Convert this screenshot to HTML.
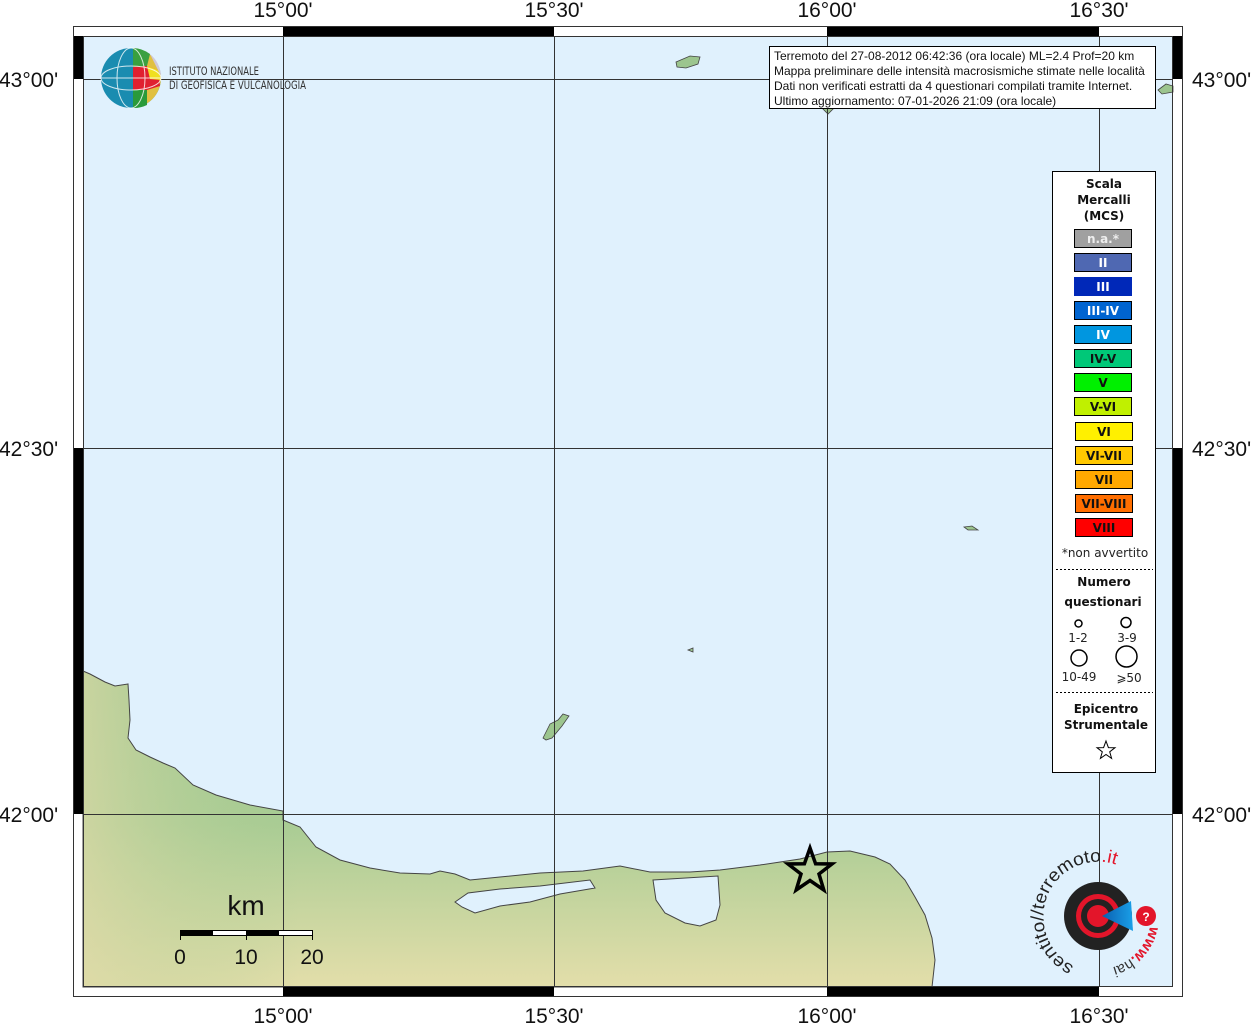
<!DOCTYPE html>
<html><head><meta charset="utf-8"><style>
html,body{margin:0;padding:0;background:#fff;}
svg{display:block;font-family:"Liberation Sans",sans-serif;}
.dv{font-family:"DejaVu Sans",sans-serif;}
</style></head><body>
<svg width="1256" height="1024" viewBox="0 0 1256 1024" xmlns="http://www.w3.org/2000/svg">
<defs>
<linearGradient id="land" x1="0" y1="0" x2="0" y2="1">
<stop offset="0" stop-color="#9ac78f"/><stop offset="0.5" stop-color="#a9cc94"/><stop offset="1" stop-color="#e3deaa"/>
</linearGradient>
<linearGradient id="land2" x1="0" y1="0" x2="1" y2="0">
<stop offset="0" stop-color="#dcd9a6" stop-opacity="0.7"/><stop offset="0.25" stop-color="#a8cc92" stop-opacity="0"/><stop offset="1" stop-color="#a8cc92" stop-opacity="0"/>
</linearGradient>
<linearGradient id="cone" x1="0" y1="0" x2="1" y2="0"><stop offset="0" stop-color="#0a5fb0"/><stop offset="1" stop-color="#1aa0e8"/></linearGradient>
<clipPath id="landclip"><path id="landpath" d="M83,671 L90,674 L105,682 L115,686 L128,684 L129,700 L130,720 L128,738 L136,750 L150,757 L163,763 L175,768 L193,785 L216,795 L250,805 L283,811 L283,820 L300,827 L316,847 L340,860 L370,868 L400,873 L430,874 L440,871 L455,874 L470,880 L500,877 L540,873 L583,871 L620,866 L650,872 L690,872 L720,870 L760,865 L800,859 L827,852 L850,851 L875,857 L890,864 L905,880 L915,897 L925,915 L932,938 L935,960 L932,987 L83,987 Z"/></clipPath>
</defs>
<rect x="0" y="0" width="1256" height="1024" fill="#fff"/>
<rect x="83" y="36" width="1090" height="951" fill="#e0f1fd"/>
<!-- land -->
<rect x="83" y="660" width="860" height="327" fill="url(#land)" clip-path="url(#landclip)"/>
<rect x="83" y="660" width="860" height="327" fill="url(#land2)" clip-path="url(#landclip)"/>
<use href="#landpath" fill="none" stroke="#444" stroke-width="1"/>
<!-- lagoons -->
<path d="M455,902 L468,893 L500,889 L540,886 L590,880 L595,888 L560,894 L530,902 L500,906 L475,913 L462,907 Z" fill="#e0f1fd" stroke="#444" stroke-width="1"/>
<path d="M653,880 L718,876 L720,905 L716,920 L700,926 L685,923 L665,913 L656,900 Z" fill="#e0f1fd" stroke="#444" stroke-width="1"/>
<!-- islands -->
<path d="M543,738 L550,724 L558,720 L563,714 L569,716 L562,726 L552,738 L546,740 Z" fill="#9cc58e" stroke="#444" stroke-width="0.8"/>
<path d="M676,62 L690,56 L700,57 L698,64 L686,68 L677,67 Z" fill="#9cc58e" stroke="#444" stroke-width="0.8"/>
<path d="M688,650 L693,648 L693,652 Z" fill="#9cc58e" stroke="#444" stroke-width="0.8"/>
<path d="M964,527 L972,526 L978,530 L968,530 Z" fill="#9cc58e" stroke="#444" stroke-width="0.8"/>
<path d="M1158,90 L1166,84 L1173,86 L1173,92 L1162,94 Z" fill="#9cc58e" stroke="#444" stroke-width="0.8"/>
<path d="M822,108 L828,104 L834,108 L828,114 Z" fill="#9cc58e" stroke="#444" stroke-width="0.8"/>
<!-- grid -->
<g stroke="#333" stroke-width="1">
<line x1="283.5" y1="36" x2="283.5" y2="987"/><line x1="554.5" y1="36" x2="554.5" y2="987"/>
<line x1="827.5" y1="36" x2="827.5" y2="987"/><line x1="1099.5" y1="36" x2="1099.5" y2="987"/>
<line x1="83" y1="79.5" x2="1173" y2="79.5"/><line x1="83" y1="448.5" x2="1173" y2="448.5"/><line x1="83" y1="814.5" x2="1173" y2="814.5"/>
</g>
<!-- frame -->
<rect x="73.5" y="26.5" width="1109" height="970" fill="none" stroke="#333" stroke-width="1"/>
<rect x="83.5" y="36.5" width="1089" height="950" fill="none" stroke="#333" stroke-width="1"/>
<g fill="#000">
<rect x="283" y="27" width="271" height="9"/><rect x="827" y="27" width="272" height="9"/>
<rect x="283" y="987" width="271" height="9"/><rect x="827" y="987" width="272" height="9"/>
<rect x="74" y="36" width="9" height="43"/><rect x="74" y="448" width="9" height="366"/>
<rect x="1173" y="36" width="9" height="43"/><rect x="1173" y="448" width="9" height="366"/>
</g>
<!-- labels -->
<g font-size="21" fill="#111" text-anchor="middle">
<text x="283" y="17">15°00'</text><text x="554" y="17">15°30'</text><text x="827" y="17">16°00'</text><text x="1099" y="17">16°30'</text>
<text x="283" y="1023">15°00'</text><text x="554" y="1023">15°30'</text><text x="827" y="1023">16°00'</text><text x="1099" y="1023">16°30'</text>
</g>
<g font-size="21" fill="#111">
<text x="-1" y="87">43°00'</text><text x="-1" y="456">42°30'</text><text x="-1" y="822">42°00'</text>
<text x="1192" y="87">43°00'</text><text x="1192" y="456">42°30'</text><text x="1192" y="822">42°00'</text>
</g>
<!-- INGV logo -->
<g>
<circle cx="131" cy="78" r="30" fill="#1a8cb0"/>
<path d="M133,48 A30,30 0 0 1 161,78 A30,30 0 0 1 133,108 Z" fill="#e0c040"/>
<path d="M133,48 A30,30 0 0 1 150,54 L147,66 L133,67 Z" fill="#3aa040"/>
<path d="M133,67 L147,66 L158,70 L160,86 L147,90 L133,90 Z" fill="#e02030"/>
<path d="M147,66 L158,70 L161,80 L150,79 Z" fill="#f0e020"/>
<path d="M133,90 L147,90 L147,105 A30,30 0 0 1 133,108 Z" fill="#2a9a3a"/>
<path d="M150,54 A30,30 0 0 1 161,76 L155,64 Z" fill="#d0c8d8"/>
<g stroke="#fff" stroke-width="1" fill="none" opacity="0.8">
<ellipse cx="131" cy="78" rx="30" ry="12"/><ellipse cx="131" cy="78" rx="14" ry="30"/><line x1="101" y1="78" x2="161" y2="78"/>
</g>
<text x="169" y="75" font-size="11.5" fill="#333" textLength="90" lengthAdjust="spacingAndGlyphs" font-family="'DejaVu Sans Condensed','Liberation Sans Narrow',sans-serif">ISTITUTO NAZIONALE</text>
<text x="169" y="89" font-size="11.5" fill="#333" textLength="137" lengthAdjust="spacingAndGlyphs" font-family="'DejaVu Sans Condensed','Liberation Sans Narrow',sans-serif">DI GEOFISICA E VULCANOLOGIA</text>
</g>
<!-- info box -->
<rect x="769.5" y="46.5" width="386" height="62" fill="#fff" stroke="#000" stroke-width="1"/>
<g font-size="12" fill="#111">
<text x="774" y="60">Terremoto del 27-08-2012 06:42:36 (ora locale) ML=2.4 Prof=20 km</text>
<text x="774" y="75">Mappa preliminare delle intensità macrosismiche stimate nelle località</text>
<text x="774" y="90">Dati non verificati estratti da 4 questionari compilati tramite Internet.</text>
<text x="774" y="105">Ultimo aggiornamento: 07-01-2026 21:09 (ora locale)</text>
</g>
<!-- legend -->
<rect x="1052.5" y="171.5" width="103" height="601" fill="#fff" stroke="#000" stroke-width="1"/>
<g class="dv" font-size="12" font-weight="bold" text-anchor="middle" fill="#111">
<text x="1104" y="188">Scala</text><text x="1104" y="204">Mercalli</text><text x="1104" y="220">(MCS)</text>
</g>
<g stroke="#000" stroke-width="1">
<rect x="1074.5" y="229.5" width="57" height="18" fill="#a0a0a0"/>
<rect x="1074.5" y="253.5" width="57" height="18" fill="#4f68b2"/>
<rect x="1074.5" y="277.5" width="57" height="18" fill="#0028b8" stroke="#0028b8"/>
<rect x="1074.5" y="301.5" width="57" height="18" fill="#0064d0"/>
<rect x="1074.5" y="325.5" width="57" height="18" fill="#0096e0"/>
<rect x="1074.5" y="349.5" width="57" height="18" fill="#00c878"/>
<rect x="1074.5" y="373.5" width="57" height="18" fill="#00f000"/>
<rect x="1074.5" y="397.5" width="57" height="18" fill="#c0f000"/>
<rect x="1075.5" y="422.5" width="57" height="18" fill="#fff000"/>
<rect x="1075.5" y="446.5" width="57" height="18" fill="#ffc800"/>
<rect x="1075.5" y="470.5" width="57" height="18" fill="#ffa800"/>
<rect x="1075.5" y="494.5" width="57" height="18" fill="#ff6e00"/>
<rect x="1075.5" y="518.5" width="57" height="18" fill="#ff0000"/>
</g>
<g class="dv" font-size="12" font-weight="bold" text-anchor="middle">
<text x="1103" y="243" fill="#eee">n.a.*</text>
<text x="1103" y="267" fill="#fff">II</text>
<text x="1103" y="291" fill="#fff">III</text>
<text x="1103" y="315" fill="#fff">III-IV</text>
<text x="1103" y="339" fill="#fff">IV</text>
<text x="1103" y="363" fill="#111">IV-V</text>
<text x="1103" y="387" fill="#111">V</text>
<text x="1103" y="411" fill="#111">V-VI</text>
<text x="1104" y="436" fill="#111">VI</text>
<text x="1104" y="460" fill="#111">VI-VII</text>
<text x="1104" y="484" fill="#111">VII</text>
<text x="1104" y="508" fill="#111">VII-VIII</text>
<text x="1104" y="532" fill="#111">VIII</text>
</g>
<text class="dv" x="1105" y="557" font-size="12" text-anchor="middle" fill="#222">*non avvertito</text>
<line x1="1056" y1="569.5" x2="1153" y2="569.5" stroke="#000" stroke-dasharray="2,2"/>
<g class="dv" font-size="12" font-weight="bold" text-anchor="middle" fill="#111">
<text x="1104" y="586">Numero</text><text x="1103" y="606">questionari</text>
</g>
<g fill="none" stroke="#000" stroke-width="1.5">
<circle cx="1078.5" cy="623.5" r="3.5"/><circle cx="1126" cy="622.5" r="5"/>
<circle cx="1079" cy="658" r="8"/><circle cx="1126.5" cy="656.5" r="10.5"/>
</g>
<g class="dv" font-size="12" text-anchor="middle" fill="#222">
<text x="1078" y="642">1-2</text><text x="1127" y="642">3-9</text>
<text x="1079" y="681">10-49</text><text x="1129" y="682">⩾50</text>
</g>
<line x1="1056" y1="692.5" x2="1153" y2="692.5" stroke="#000" stroke-dasharray="2,2"/>
<g class="dv" font-size="12" font-weight="bold" text-anchor="middle" fill="#111">
<text x="1106" y="713">Epicentro</text><text x="1106" y="729">Strumentale</text>
</g>
<path d="M1106,741 L1108.4,747.6 L1115,747.7 L1109.7,751.8 L1111.6,758.4 L1106,754.5 L1100.4,758.4 L1102.3,751.8 L1097,747.7 L1103.6,747.6 Z" fill="#fff" stroke="#000" stroke-width="1"/>
<!-- epicentre star -->
<path d="M810,848 L815.6,863.8 L832,864 L819,874 L823.8,890 L810,880.5 L796.2,890 L801,874 L788,864 L804.4,863.8 Z" fill="none" stroke="#000" stroke-width="3.5"/>
<!-- scale bar -->
<text x="246" y="915" font-size="28" text-anchor="middle" fill="#111">km</text>
<rect x="180.5" y="930.5" width="132" height="5" fill="#fff" stroke="#000" stroke-width="1"/>
<rect x="180" y="930" width="33" height="6" fill="#000"/><rect x="246" y="930" width="33" height="6" fill="#000"/>
<g stroke="#000" stroke-width="1"><line x1="180.5" y1="930" x2="180.5" y2="940"/><line x1="246.5" y1="930" x2="246.5" y2="940"/><line x1="312.5" y1="930" x2="312.5" y2="940"/></g>
<g font-size="21" text-anchor="middle" fill="#111"><text x="180" y="964">0</text><text x="246" y="964">10</text><text x="312" y="964">20</text></g>
<!-- haisentito logo -->
<g>
<circle cx="1098" cy="916" r="34" fill="#222"/>
<circle cx="1098" cy="916" r="22" fill="#e3152a"/>
<circle cx="1098" cy="916" r="17" fill="#222"/>
<circle cx="1098" cy="916" r="11" fill="#e3152a"/>
<path d="M1102,916 L1131,901 L1133,931 Z" fill="url(#cone)"/>
<circle cx="1146" cy="916" r="10" fill="#e3152a"/>
<text x="1146" y="921" font-size="12" font-weight="bold" text-anchor="middle" fill="#fff">?</text>
<path id="arcTop" d="M1074,966 A55,55 0 1 1 1148,893" fill="none"/>
<text font-size="18" fill="#222"><textPath href="#arcTop" textLength="165" lengthAdjust="spacingAndGlyphs">sentito//terremoto<tspan fill="#e3152a">.it</tspan></textPath></text>
<path id="arcBot" d="M1150,926 A53,53 0 0 1 1086,968" fill="none"/>
<text font-size="15" fill="#e3152a" font-weight="bold"><textPath href="#arcBot">www.<tspan fill="#333" font-weight="normal">hai</tspan></textPath></text>
</g>
</svg>
</body></html>
